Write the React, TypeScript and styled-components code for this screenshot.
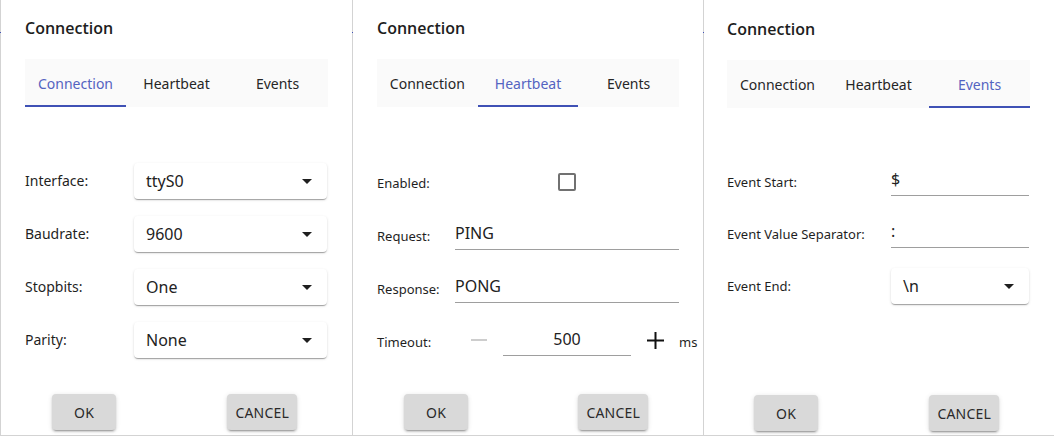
import React from "react";
import styled, { createGlobalStyle } from "styled-components";

const Global = createGlobalStyle`
  html, body { margin: 0; padding: 0; background: #ffffff; }
  body {
    font-family: "Noto Sans", "Open Sans", sans-serif;
    color: #222222;
    -webkit-font-smoothing: antialiased;
  }
  * { box-sizing: border-box; }
`;

const Page = styled.div`
  display: flex;
  gap: 1px;
  padding-left: 1px;
  height: 436px;
  background:
    linear-gradient(to bottom, transparent 32px, #3f51b5 32px, #3f51b5 33px, transparent 33px),
    #d3d3d3;
`;

const Panel = styled.section<{ $w: number; $shift?: number; $padL?: number }>`
  width: ${(p) => p.$w}px;
  flex: none;
  height: 435px;
  background: #ffffff;
  padding: ${(p) => 16 + (p.$shift || 0)}px 24px ${(p) => 5 - (p.$shift || 0)}px
    ${(p) => p.$padL ?? 24}px;
  display: flex;
  flex-direction: column;
`;

const Title = styled.h2`
  margin: 0;
  font-family: "Open Sans", "Noto Sans", sans-serif;
  font-size: 16px;
  line-height: 24px;
  font-weight: 600;
  color: #1d1d1d;
`;

const TabBar = styled.div`
  margin-top: 19px;
  height: 48px;
  display: flex;
  background: #fafafa;
`;

const Tab = styled.div<{ $active?: boolean }>`
  flex: 1;
  display: flex;
  align-items: center;
  justify-content: center;
  font-size: 14px;
  color: ${(p) => (p.$active ? "#5463c1" : "#262626")};
  box-shadow: ${(p) => (p.$active ? "inset 0 -2px 0 #3f51b5" : "none")};
`;

const Form = styled.div<{ $top: number; $cols: string; $gap: number }>`
  margin-top: ${(p) => p.$top}px;
  display: grid;
  grid-template-columns: ${(p) => p.$cols};
  grid-auto-rows: 36px;
  row-gap: ${(p) => p.$gap}px;
  align-items: center;
`;

const Label = styled.div<{ $size?: number }>`
  font-size: ${(p) => p.$size || 13}px;
  line-height: 20px;
  color: #1f1f1f;
  white-space: nowrap;
`;

const SelectBox = styled.div`
  height: 36px;
  background: #ffffff;
  border-radius: 4px;
  box-shadow: 0 2px 1px -1px rgba(0, 0, 0, 0.2), 0 1px 1px 0 rgba(0, 0, 0, 0.14),
    0 1px 3px 0 rgba(0, 0, 0, 0.12);
  display: flex;
  align-items: center;
  padding: 0 8px 0 12px;
  font-size: 16px;
  color: #222222;
`;

const SelectValue = styled.span`
  flex: 1;
  line-height: 22px;
`;

const TextField = styled.input<{ $center?: boolean }>`
  align-self: start;
  width: 100%;
  min-width: 0;
  border: none;
  border-bottom: 1px solid #9e9e9e;
  border-radius: 0;
  padding: 4px 0 5px;
  font-family: inherit;
  font-size: 16px;
  line-height: 22px;
  height: 32px;
  color: #222222;
  background: transparent;
  outline: none;
  text-align: ${(p) => (p.$center ? "center" : "left")};
`;

const Checkbox = styled.span`
  justify-self: center;
  width: 18px;
  height: 18px;
  margin-top: -2px;
  border: 2px solid #717171;
  border-radius: 2px;
`;

const Stepper = styled.div`
  display: flex;
  align-items: center;
  width: 224px;
  height: 36px;
`;

const StepButton = styled.div`
  flex: none;
  width: 48px;
  height: 32px;
  align-self: flex-start;
  display: flex;
  align-items: center;
  justify-content: center;
`;

const StepInput = styled(TextField)`
  flex: none;
  width: 128px;
`;

const Unit = styled.span`
  flex: none;
  font-size: 13px;
  color: #1f1f1f;
`;

const Actions = styled.div`
  margin-top: auto;
  display: flex;
  justify-content: space-between;
  padding: 0 31px 0 27px;
`;

const Button = styled.button`
  height: 36px;
  min-width: 64px;
  padding: 0 8px;
  border: none;
  border-radius: 4px;
  background: #d9d9d9;
  color: #2a2a2a;
  font-family: inherit;
  font-size: 14px;
  letter-spacing: 0.2px;
  text-transform: uppercase;
  box-shadow: 0 3px 1px -2px rgba(0, 0, 0, 0.2), 0 2px 2px 0 rgba(0, 0, 0, 0.14),
    0 1px 5px 0 rgba(0, 0, 0, 0.12);
`;

const Caret = () => (
  <svg width="24" height="24" viewBox="0 0 24 24">
    <path d="M7 10l5 5 5-5z" fill="#1f1f1f" />
  </svg>
);

const Select = ({ value }: { value: string }) => (
  <SelectBox>
    <SelectValue>{value}</SelectValue>
    <Caret />
  </SelectBox>
);

const Minus = () => (
  <svg width="16" height="16" viewBox="0 0 16 16">
    <path d="M0 8h16" stroke="#cdcdcd" strokeWidth="2" />
  </svg>
);

const Plus = () => (
  <svg width="17" height="17" viewBox="0 0 17 17">
    <path d="M0 8.5h17M8.5 0v17" stroke="#111111" strokeWidth="2" />
  </svg>
);

const tabs = ["Connection", "Heartbeat", "Events"];

const Tabs = ({ active }: { active: number }) => (
  <TabBar>
    {tabs.map((t, i) => (
      <Tab key={t} $active={i === active}>
        {t}
      </Tab>
    ))}
  </TabBar>
);

const Footer = () => (
  <Actions>
    <Button>OK</Button>
    <Button>Cancel</Button>
  </Actions>
);

export default function App() {
  return (
    <>
      <Global />
      <Page>
        <Panel $w={351}>
          <Title>Connection</Title>
          <Tabs active={0} />
          <Form $top={56} $cols="109px 193px" $gap={17}>
            <Label $size={14}>Interface:</Label>
            <Select value="ttyS0" />
            <Label $size={14}>Baudrate:</Label>
            <Select value="9600" />
            <Label $size={14}>Stopbits:</Label>
            <Select value="One" />
            <Label $size={14}>Parity:</Label>
            <Select value="None" />
          </Form>
          <Footer />
        </Panel>
        <Panel $w={350}>
          <Title>Connection</Title>
          <Tabs active={1} />
          <Form $top={58} $cols="78px 224px" $gap={17}>
            <Label>Enabled:</Label>
            <Checkbox />
            <Label>Request:</Label>
            <TextField defaultValue="PING" readOnly />
            <Label>Response:</Label>
            <TextField defaultValue="PONG" readOnly />
            <Label>Timeout:</Label>
            <Stepper>
              <StepButton>
                <Minus />
              </StepButton>
              <StepInput $center defaultValue="500" readOnly />
              <StepButton>
                <Plus />
              </StepButton>
              <Unit>ms</Unit>
            </Stepper>
          </Form>
          <Footer />
        </Panel>
        <Panel $w={350} $shift={1} $padL={23}>
          <Title>Connection</Title>
          <Tabs active={2} />
          <Form $top={56} $cols="164px 138px" $gap={16}>
            <Label>Event Start:</Label>
            <TextField defaultValue="$" readOnly />
            <Label>Event Value Separator:</Label>
            <TextField defaultValue=":" readOnly />
            <Label>Event End:</Label>
            <Select value="\n" />
          </Form>
          <Footer />
        </Panel>
      </Page>
    </>
  );
}
